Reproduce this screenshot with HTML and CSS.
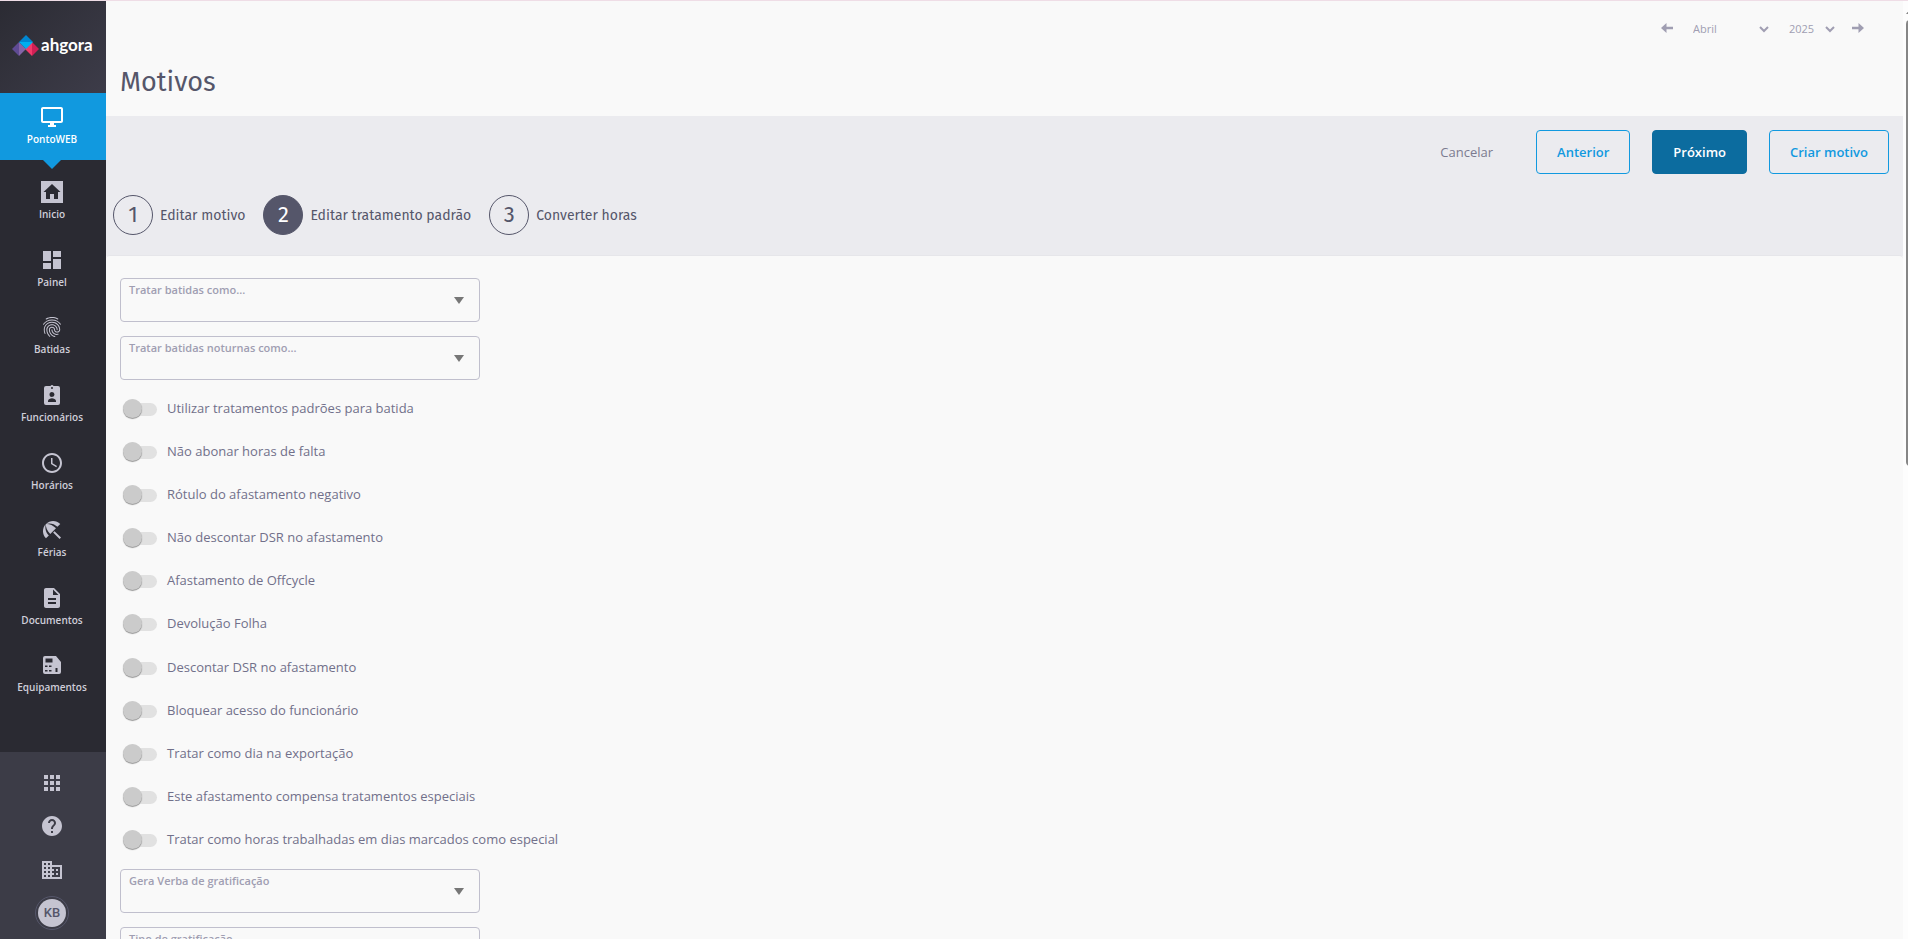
FILE: index.html
```
<!DOCTYPE html>
<html lang="pt-BR">
<head>
  <meta charset="utf-8">
  <title>Motivos</title>
  <link rel="stylesheet" href="styles.css">
</head>
<body>
  <aside class="sidebar">
    <a href="#" class="logo">
      <svg width="27" height="21" viewBox="0 0 27 21">
        <path d="M7 7v14L0 14z" fill="#5f4b94"/>
        <path d="M7 7l7 7-7 7z" fill="#8464a8"/>
        <path d="M20 7v14l-7-7z" fill="#f23a6b"/>
        <path d="M20 7l7 7-7 7z" fill="#d01f55"/>
        <path d="M14 0l7 7H7z" fill="#0086d1"/>
        <path d="M7 7h14l-7 7z" fill="#00aeef"/>
      </svg>
      <span>ahgora</span>
    </a>

    <nav class="menu">
      <a href="#" class="ativo">
        <svg width="24" height="24" viewBox="0 0 24 24"><path d="M21 2H3c-1.100 0-2 .9-2 2v12c0 1.100.9 2 2 2h7v2H8v2h8v-2h-2v-2h7c1.100 0 2-.9 2-2V4c0-1.100-.9-2-2-2zm0 14H3V4h18v12z"/></svg>
        <span>PontoWEB</span>
      </a>
      <a href="#">
        <svg width="24" height="24" viewBox="0 0 24 24"><path fill-rule="evenodd" d="M1 1h22v22H1zM12 4L3.500 12H6v7h4v-5h4v5h4v-7h2.500z"/></svg>
        <span>Inicio</span>
      </a>
      <a href="#">
        <svg width="24" height="24" viewBox="0 0 24 24"><path d="M3 13h8V3H3v10zm0 8h8v-6H3v6zm10 0h8V11h-8v10zm0-18v6h8V3h-8z"/></svg>
        <span>Painel</span>
      </a>
      <a href="#">
        <svg width="24" height="24" viewBox="0 0 24 24"><path d="M17.81 4.47c-.08 0-.16-.02-.23-.06C15.66 3.42 14 3 12.010 3c-1.980 0-3.860.47-5.570 1.410-.24.13-.54.04-.68-.2-.13-.24-.04-.55.2-.68C7.820 2.520 9.860 2 12.010 2c2.130 0 3.990.47 6.030 1.520.25.13.34.43.21.67-.09.18-.26.28-.44.28zM3.500 9.720c-.1 0-.2-.03-.29-.09-.23-.16-.28-.47-.12-.7.99-1.400 2.250-2.500 3.750-3.270C9.980 4.040 14 4.030 17.150 5.650c1.500.77 2.760 1.860 3.750 3.250.16.22.11.54-.12.7-.23.16-.54.11-.7-.12-.9-1.260-2.040-2.250-3.390-2.940-2.870-1.470-6.540-1.470-9.400.01-1.360.7-2.500 1.700-3.400 2.960-.08.14-.23.21-.39.21zm6.250 12.070c-.13 0-.26-.05-.35-.15-.87-.87-1.340-1.430-2.010-2.640-.69-1.230-1.050-2.730-1.050-4.340 0-2.970 2.540-5.390 5.660-5.390s5.660 2.420 5.660 5.390c0 .28-.22.5-.5.5s-.5-.22-.5-.5c0-2.420-2.090-4.390-4.660-4.390-2.570 0-4.660 1.970-4.660 4.390 0 1.440.32 2.770.93 3.850.64 1.150 1.080 1.640 1.850 2.420.19.2.19.51 0 .71-.11.1-.24.15-.37.15zm7.170-1.850c-1.190 0-2.240-.3-3.100-.89-1.490-1.010-2.380-2.650-2.380-4.390 0-.28.22-.5.5-.5s.5.22.5.5c0 1.410.72 2.740 1.940 3.560.71.48 1.540.71 2.540.71.24 0 .64-.03 1.040-.1.27-.05.53.13.58.41.05.27-.13.53-.41.58-.57.11-1.070.12-1.210.12zM14.910 22c-.04 0-.09-.01-.13-.02-1.590-.44-2.630-1.030-3.720-2.100-1.400-1.390-2.170-3.240-2.170-5.220 0-1.620 1.380-2.940 3.080-2.940 1.700 0 3.080 1.320 3.080 2.940 0 1.070.93 1.940 2.080 1.940s2.080-.87 2.080-1.940c0-3.770-3.250-6.830-7.250-6.830-2.840 0-5.440 1.580-6.610 4.030-.39.81-.59 1.760-.59 2.800 0 .78.07 2.010.67 3.610.1.26-.03.55-.29.64-.26.1-.55-.04-.64-.29-.49-1.310-.73-2.610-.73-3.960 0-1.200.23-2.290.68-3.240 1.330-2.790 4.280-4.600 7.510-4.600 4.550 0 8.250 3.510 8.250 7.830 0 1.620-1.380 2.940-3.080 2.940s-3.080-1.320-3.080-2.940c0-1.070-.93-1.940-2.080-1.940s-2.080.87-2.080 1.940c0 1.710.66 3.310 1.870 4.510.95.94 1.860 1.460 3.270 1.850.27.07.42.35.35.61-.05.23-.26.38-.47.38z"/></svg>
        <span>Batidas</span>
      </a>
      <a href="#">
        <svg width="24" height="24" viewBox="0 0 24 24"><path fill-rule="evenodd" d="M6 3h4.500a1.700 1.700 0 0 1 3 0H18a2 2 0 0 1 2 2v15a2 2 0 0 1-2 2H6a2 2 0 0 1-2-2V5a2 2 0 0 1 2-2zM12 4a1 1 0 1 0 0 2 1 1 0 0 0 0-2zM12 9a2.500 2.500 0 1 0 0 5 2.500 2.500 0 0 0 0-5zM8 19h8v-1c0-1.700-2.500-2.700-4-2.700s-4 1-4 2.700z"/></svg>
        <span>Funcionários</span>
      </a>
      <a href="#">
        <svg width="24" height="24" viewBox="0 0 24 24"><path d="M11.990 2C6.470 2 2 6.480 2 12s4.470 10 9.990 10C17.520 22 22 17.520 22 12S17.520 2 11.990 2zM12 20c-4.420 0-8-3.580-8-8s3.580-8 8-8 8 3.580 8 8-3.580 8-8 8zm.5-13H11v6l5.250 3.150.75-1.230-4.500-2.670z"/></svg>
        <span>Horários</span>
      </a>
      <a href="#">
        <svg width="24" height="24" viewBox="0 0 24 24"><path d="M13.127 14.560l1.430-1.430 6.440 6.443L19.570 21zm4.293-5.730l2.860-2.860c-3.950-3.950-10.350-3.960-14.300-.02 3.930-1.300 8.310-.25 11.440 2.880zM5.950 5.980c-3.940 3.950-3.930 10.350.02 14.300l2.860-2.860C5.700 14.290 4.650 9.910 5.950 5.980zm.02-.02l-.01.01c-.38 3.010 1.170 6.880 4.300 10.020l5.730-5.730c-3.130-3.130-7.010-4.680-10.020-4.300z"/></svg>
        <span>Férias</span>
      </a>
      <a href="#">
        <svg width="24" height="24" viewBox="0 0 24 24"><path d="M14 2H6c-1.100 0-2 .9-2 2v16c0 1.100.89 2 1.990 2H18c1.100 0 2-.9 2-2V8l-6-6zm2 16H8v-2h8v2zm0-4H8v-2h8v2zm-3-5V3.500L18.500 9H13z"/></svg>
        <span>Documentos</span>
      </a>
      <a href="#">
        <svg width="24" height="24" viewBox="0 0 24 24"><path fill-rule="evenodd" d="M5 3h11l5 6v10a2 2 0 0 1-2 2H5a2 2 0 0 1-2-2V5a2 2 0 0 1 2-2zM5.500 5.500v4h7v-4zM5 12.500V14h2.500v-1.500zM9 12.500V14h2.500v-1.500zM5 17v1.500h2.500V17zM9 17v1.500h2.500V17zM15.500 15v4h2v-4z"/></svg>
        <span>Equipamentos</span>
      </a>
    </nav>

    <div class="rodape">
      <a href="#" title="Aplicativos">
        <svg width="24" height="24" viewBox="0 0 24 24"><path d="M4 8h4V4H4v4zm6 12h4v-4h-4v4zm-6 0h4v-4H4v4zm0-6h4v-4H4v4zm6 0h4v-4h-4v4zm6-10v4h4V4h-4zm-6 4h4V4h-4v4zm6 6h4v-4h-4v4zm0 6h4v-4h-4v4z"/></svg>
      </a>
      <a href="#" title="Ajuda">
        <svg width="24" height="24" viewBox="0 0 24 24"><path d="M12 2C6.480 2 2 6.480 2 12s4.480 10 10 10 10-4.480 10-10S17.520 2 12 2zm1 17h-2v-2h2v2zm2.070-7.750l-.9.92C13.450 12.900 13 13.500 13 15h-2v-.5c0-1.100.45-2.100 1.170-2.830l1.240-1.260c.37-.36.59-.86.59-1.410 0-1.100-.9-2-2-2s-2 .9-2 2H8c0-2.210 1.790-4 4-4s4 1.790 4 4c0 .88-.36 1.680-.93 2.250z"/></svg>
      </a>
      <a href="#" title="Empresa">
        <svg width="24" height="24" viewBox="0 0 24 24"><path d="M12 7V3H2v18h20V7H12zM6 19H4v-2h2v2zm0-4H4v-2h2v2zm0-4H4V9h2v2zm0-4H4V5h2v2zm4 12H8v-2h2v2zm0-4H8v-2h2v2zm0-4H8V9h2v2zm0-4H8V5h2v2zm10 12h-8v-2h2v-2h-2v-2h2v-2h-2V9h8v10zm-2-8h-2v2h2v-2zm0 4h-2v2h2v-2z"/></svg>
      </a>
      <a href="#"><span class="avatar">KB</span></a>
    </div>
  </aside>

  <main class="conteudo">
    <header class="topo">
      <div class="periodo">
        <button class="seta" aria-label="Mês anterior">
          <svg width="12" height="10" viewBox="0 0 12 10"><path d="M0 5l5.500-5v3.800H12v2.400H5.500V10z"/></svg>
        </button>
        <div class="escolha mes">
          <select aria-label="Mês"><option>Abril</option></select>
          <svg width="10" height="7" viewBox="0 0 10 7"><path d="M1 1l4 4 4-4"/></svg>
        </div>
        <div class="escolha ano">
          <select aria-label="Ano"><option>2025</option></select>
          <svg width="10" height="7" viewBox="0 0 10 7"><path d="M1 1l4 4 4-4"/></svg>
        </div>
        <button class="seta" aria-label="Próximo mês">
          <svg width="12" height="10" viewBox="0 0 12 10"><path d="M12 5L6.500 0v3.800H0v2.400h6.500V10z"/></svg>
        </button>
      </div>
      <h1>Motivos</h1>
    </header>

    <section class="faixa">
      <div class="acoes">
        <button class="botao texto">Cancelar</button>
        <button class="botao">Anterior</button>
        <button class="botao principal">Próximo</button>
        <button class="botao">Criar motivo</button>
      </div>
      <ol class="etapas">
        <li><span class="numero">1</span>Editar motivo</li>
        <li><span class="numero atual">2</span>Editar tratamento padrão</li>
        <li><span class="numero">3</span>Converter horas</li>
      </ol>
    </section>

    <form class="formulario">
      <div class="campo">
        <label for="batidas">Tratar batidas como...</label>
        <select id="batidas"><option></option></select>
      </div>
      <div class="campo">
        <label for="noturnas">Tratar batidas noturnas como...</label>
        <select id="noturnas"><option></option></select>
      </div>

      <div class="opcoes">
        <label><input type="checkbox"><span>Utilizar tratamentos padrões para batida</span></label>
        <label><input type="checkbox"><span>Não abonar horas de falta</span></label>
        <label><input type="checkbox"><span>Rótulo do afastamento negativo</span></label>
        <label><input type="checkbox"><span>Não descontar DSR no afastamento</span></label>
        <label><input type="checkbox"><span>Afastamento de Offcycle</span></label>
        <label><input type="checkbox"><span>Devolução Folha</span></label>
        <label><input type="checkbox"><span>Descontar DSR no afastamento</span></label>
        <label><input type="checkbox"><span>Bloquear acesso do funcionário</span></label>
        <label><input type="checkbox"><span>Tratar como dia na exportação</span></label>
        <label><input type="checkbox"><span>Este afastamento compensa tratamentos especiais</span></label>
        <label><input type="checkbox"><span>Tratar como horas trabalhadas em dias marcados como especial</span></label>
      </div>

      <div class="campo">
        <label for="verba">Gera Verba de gratificação</label>
        <select id="verba"><option></option></select>
      </div>
      <div class="campo">
        <label for="gratificacao">Tipo de gratificação</label>
        <select id="gratificacao"><option></option></select>
      </div>
    </form>
  </main>

  <div class="rolagem">
    <svg width="8" height="5" viewBox="0 0 8 5"><path d="M4 0l4 5H0z"/></svg>
    <div class="rolagem-barra"></div>
  </div>
</body>
</html>
```

FILE: styles.css
```
* {
  box-sizing: border-box;
}
body {
  margin: 0;
  height: 100vh;
  display: flex;
  overflow: hidden;
  border-top: 1px solid #efdde6;
  background-color: #f9f9f9;
  color: #55566a;
  font-family: "Open Sans", sans-serif;
  font-size: 13px;
}
button, select {
  font-family: inherit;
  color: inherit;
}
a {
  text-decoration: none;
  color: inherit;
}

/* Menu lateral */
.sidebar {
  width: 106px;
  flex: none;
  display: flex;
  flex-direction: column;
  background-color: #2a2a32;
  color: #cfced9;
}
.sidebar svg {
  fill: #c5c4d1;
}
.logo {
  height: 92px;
  flex: none;
  display: flex;
  align-items: center;
  gap: 2px;
  padding: 0 0 4px 12px;
  background: linear-gradient(135deg, #2b2b33, #3d3c49);
  color: #fff;
  font-family: Lato, sans-serif;
  font-size: 17px;
  font-weight: 700;
}
.logo span {
  line-height: 20px;
}
.menu {
  height: 608px;
  flex: none;
  display: flex;
  flex-direction: column;
}
.menu a {
  flex: 1;
  display: flex;
  flex-direction: column;
  align-items: center;
  padding-top: 20px;
  padding-right: 2px;
  font-size: 10px;
  font-weight: 600;
  line-height: 14px;
}
.menu svg {
  flex: none;
  margin-bottom: 3px;
}
.menu .ativo {
  position: relative;
  flex: none;
  height: 67px;
  padding-top: 12px;
  background-color: #1199df;
  color: #fff;
}
.menu .ativo svg {
  fill: #fff;
}
.menu .ativo::after {
  content: "";
  position: absolute;
  top: 100%;
  left: 43px;
  border: 9px solid transparent;
  border-top-color: #1199df;
  border-bottom: 0;
}
.rodape {
  margin-top: auto;
  height: 187px;
  display: flex;
  flex-direction: column;
  padding: 9px 2px 4px 0;
  background-color: #3c3c47;
}
.rodape a {
  flex: 1;
  display: flex;
  align-items: center;
  justify-content: center;
}
.avatar {
  width: 34px;
  height: 34px;
  border: 1px solid #55566a;
  border-radius: 50%;
  padding: 2px;
  background-color: #c5c4d1;
  background-clip: content-box;
  color: #55566a;
  font-family: Roboto, sans-serif;
  font-weight: 500;
  line-height: 28px;
  text-align: center;
}

/* Cabeçalho */
.conteudo {
  flex: 1;
  min-width: 0;
  overflow: hidden;
}
.topo {
  height: 115px;
}
.periodo {
  height: 54px;
  display: flex;
  align-items: center;
  justify-content: flex-end;
  gap: 20px;
  padding-right: 39px;
  color: #a09eb2;
}
.seta {
  border: 0;
  padding: 0;
  background: none;
}
.seta svg {
  display: block;
  fill: #a09eb2;
}
.escolha {
  position: relative;
}
.escolha select {
  appearance: none;
  display: block;
  width: 100%;
  border: 0;
  padding: 0;
  background: none;
  font-size: 11px;
}
.escolha svg {
  position: absolute;
  right: 0;
  top: 5px;
  fill: none;
  stroke: #a09eb2;
  stroke-width: 2;
  pointer-events: none;
}
.mes {
  width: 76px;
}
.ano {
  width: 46px;
  margin-right: -3px;
}
h1 {
  margin: 9px 0 0 14px;
  font-family: "Fira Sans", "Noto Sans", sans-serif;
  font-size: 27px;
  font-weight: 400;
  line-height: 36px;
}

/* Ações e etapas */
.faixa {
  height: 140px;
  padding: 14px 14px 0 7px;
  background-color: #ebebef;
}
.acoes {
  display: flex;
  justify-content: flex-end;
  gap: 22px;
}
.botao {
  height: 44px;
  border: 1px solid #1199df;
  border-radius: 4px;
  padding: 0 20px;
  background: none;
  color: #1199df;
  font-size: 13px;
  font-weight: 600;
}
.botao.principal {
  border-color: #0c6c9f;
  background-color: #0c6c9f;
  color: #fff;
}
.botao.texto {
  border-color: transparent;
  color: #7c7b90;
  font-weight: 500;
}
.etapas {
  display: flex;
  gap: 18px;
  margin: 21px 0 0;
  padding: 0;
  list-style: none;
  font-family: "Fira Sans", "Noto Sans", sans-serif;
  font-size: 14px;
}
.etapas li {
  display: flex;
  align-items: center;
  gap: 7px;
}
.numero {
  width: 40px;
  height: 40px;
  border: 1px solid #55566a;
  border-radius: 50%;
  font-size: 22px;
  line-height: 38px;
  text-align: center;
}
.atual {
  background-color: #55566a;
  color: #fff;
}

/* Formulário */
.formulario {
  margin-top: -1px;
  padding: 22px 14px;
  border-top: 1px solid #e6e6ea;
  border-radius: 4px 4px 0 0;
  background-color: #f9f9f9;
}
.campo {
  position: relative;
  width: 360px;
  margin-bottom: 14px;
}
.campo label {
  position: absolute;
  top: 4px;
  left: 9px;
  color: #a09eb2;
  font-size: 11px;
  font-weight: 600;
  line-height: 16px;
  pointer-events: none;
}
.campo select {
  appearance: none;
  display: block;
  width: 100%;
  height: 44px;
  border: 1px solid #c0bfcd;
  border-radius: 4px;
  background: none;
}
.campo::after {
  content: "";
  position: absolute;
  top: 19px;
  right: 16px;
  border: 5px solid transparent;
  border-top: 7px solid #777;
  border-bottom: 0;
  pointer-events: none;
}
.opcoes {
  display: grid;
  grid-auto-rows: 1fr;
  justify-items: start;
  height: 475px;
  margin: -8px 0 8px;
}
.opcoes label {
  display: flex;
  align-items: center;
  gap: 10px;
  padding-left: 4px;
  color: #71708a;
}
.opcoes span {
  line-height: 18px;
}
.opcoes input {
  appearance: none;
  position: relative;
  width: 33px;
  height: 13px;
  margin: 3px 0 0;
  border-radius: 7px;
  background-color: #e1e1e1;
}
.opcoes input::before {
  content: "";
  position: absolute;
  top: -4px;
  left: -1px;
  width: 19px;
  height: 19px;
  border-radius: 50%;
  background-color: #cbcbcb;
  box-shadow: 0 1px 1px rgba(0, 0, 0, 0.4);
}
.opcoes input:checked::before {
  left: 15px;
}

/* Barra de rolagem */
.rolagem {
  width: 5px;
  flex: none;
  overflow: hidden;
  padding: 8px 0 0 3px;
  background-color: #fdfdfd;
}
.rolagem svg {
  display: block;
  margin-bottom: 6px;
  fill: #868686;
}
.rolagem-barra {
  width: 8px;
  height: 48%;
  border-radius: 4px;
  background-color: #868686;
}
```
